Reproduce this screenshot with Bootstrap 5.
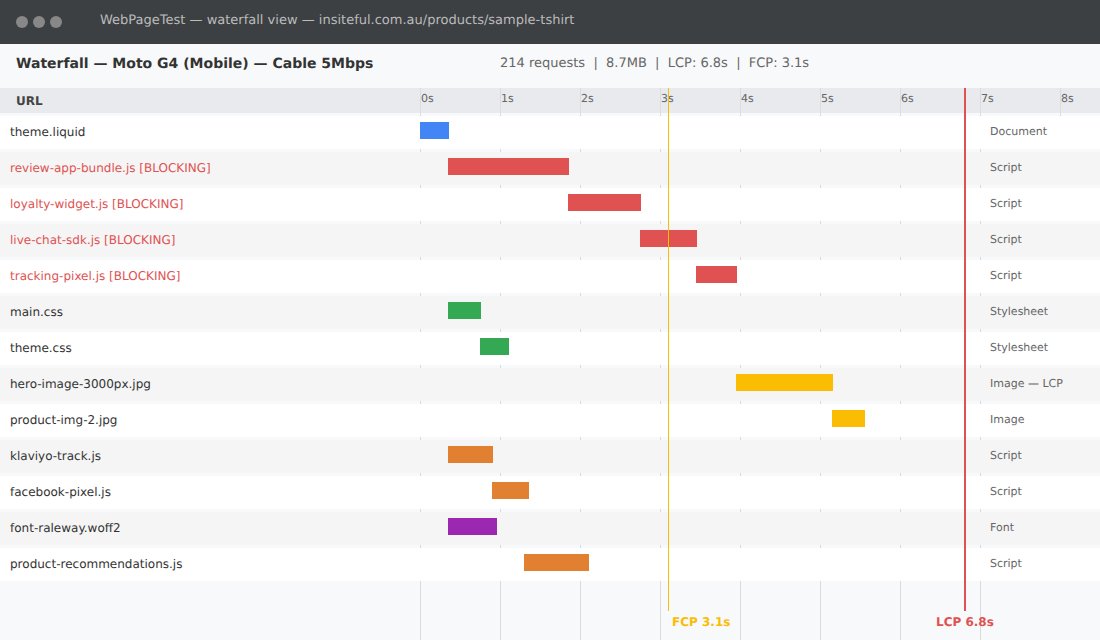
<!DOCTYPE html>
<html lang="en">
<head>
  <meta charset="UTF-8">
  <meta name="viewport" content="width=device-width, initial-scale=1.0">
  <title>WebPageTest waterfall</title>
  <link href="https://cdn.jsdelivr.net/npm/bootstrap@5.3.0/dist/css/bootstrap.min.css" rel="stylesheet">
  <style>
    html, body { height: 640px; overflow: hidden; }
    body { background: #f8f9fa; font-family: "DejaVu Sans", sans-serif; font-size: 12px; color: #333; text-rendering: geometricPrecision; }

    .title-bar { height: 44px; background: #3c4043; padding-left: 16px; }
    .win-dot { width: 12px; height: 12px; border-radius: 50%; background: #888; margin-right: 5px; }
    .title-text { margin-left: 33px; font-size: 13px; color: #bbb; margin-top: -2px; }

    .sum-bar { height: 44px; background: #f8f9fa; padding-bottom: 4px; }
    .sum-title { width: 500px; padding-left: 16px; font-size: 14px; font-weight: 700; color: #333; }
    .sum-stats { font-size: 13px; color: #666; }

    .chart-wrap { height: 552px; }
    .grid-lines { left: 420px; top: 0; bottom: 0; }
    .grid-line { width: 80px; border-left: 1px solid #dadce0; }

    .head-row { height: 25px; background: #e8eaed; margin-bottom: 3px; }
    .head-url { width: 420px; padding-left: 16px; font-weight: 700; color: #444; }
    .tick { width: 80px; height: 28px; margin-bottom: -3px; border-left: 1px solid #dadce0; padding-top: 4px; font-size: 11px; color: #666; line-height: 14px; }

    .req-row { height: 33px; margin-bottom: 3px; background: #fff; }
    .req-row.alt { background: #f5f5f5; }
    .req-name { width: 420px; padding-left: 10px; padding-bottom: 2px; color: #333; }
    .req-name.blocking { color: #e05252; }
    .req-track { width: 560px; padding-top: 6px; }
    .req-bar { height: 17px; }
    .req-type { padding-left: 10px; font-size: 11px; color: #666; }

    .bar-doc { background: #4285f4; }
    .bar-block { background: #e05252; }
    .bar-css { background: #34a853; }
    .bar-img { background: #fbbc04; }
    .bar-js { background: #e08030; }
    .bar-font { background: #9c27b0; }

    .mark-line { top: 0; height: 523px; }
    .mark-fcp { left: 668px; width: 1px; background: #fbbc04; }
    .mark-lcp { left: 964px; width: 2px; background: #e05252; }
    .mark-label { top: 527px; font-size: 12px; font-weight: 700; line-height: 14px; }
    .label-fcp { left: 672px; color: #fbbc04; }
    .label-lcp { left: 936px; color: #e05252; }
  </style>
</head>
<body>
  <div class="title-bar d-flex align-items-center">
    <span class="win-dot"></span>
    <span class="win-dot"></span>
    <span class="win-dot"></span>
    <span class="title-text">WebPageTest — waterfall view — insiteful.com.au/products/sample-tshirt</span>
  </div>

  <div class="sum-bar d-flex align-items-center">
    <div class="sum-title">Waterfall — Moto G4 (Mobile) — Cable 5Mbps</div>
    <div class="sum-stats">214 requests &nbsp;|&nbsp; 8.7MB &nbsp;|&nbsp; LCP: 6.8s &nbsp;|&nbsp; FCP: 3.1s</div>
  </div>

  <div class="chart-wrap position-relative">
    <div class="grid-lines position-absolute d-flex">
      <div class="grid-line"></div><div class="grid-line"></div><div class="grid-line"></div>
      <div class="grid-line"></div><div class="grid-line"></div><div class="grid-line"></div>
      <div class="grid-line"></div><div class="grid-line"></div>
    </div>

    <div class="position-relative">
      <div class="head-row d-flex">
        <div class="head-url d-flex align-items-center flex-shrink-0">URL</div>
        <div class="tick flex-shrink-0">0s</div><div class="tick flex-shrink-0">1s</div><div class="tick flex-shrink-0">2s</div><div class="tick flex-shrink-0">3s</div>
        <div class="tick flex-shrink-0">4s</div><div class="tick flex-shrink-0">5s</div><div class="tick flex-shrink-0">6s</div><div class="tick flex-shrink-0">7s</div>
        <div class="tick flex-shrink-0">8s</div>
      </div>
      <div id="rows"></div>
    </div>

    <div class="mark-line mark-fcp position-absolute"></div>
    <div class="mark-line mark-lcp position-absolute"></div>
    <div class="mark-label label-fcp position-absolute">FCP 3.1s</div>
    <div class="mark-label label-lcp position-absolute">LCP 6.8s</div>
  </div>

  <script>
    // name, start px, width px, bar class, type
    const requests = [
      ['theme.liquid', 0, 29, 'bar-doc', 'Document'],
      ['review-app-bundle.js [BLOCKING]', 28, 121, 'bar-block', 'Script'],
      ['loyalty-widget.js [BLOCKING]', 148, 73, 'bar-block', 'Script'],
      ['live-chat-sdk.js [BLOCKING]', 220, 57, 'bar-block', 'Script'],
      ['tracking-pixel.js [BLOCKING]', 276, 41, 'bar-block', 'Script'],
      ['main.css', 28, 33, 'bar-css', 'Stylesheet'],
      ['theme.css', 60, 29, 'bar-css', 'Stylesheet'],
      ['hero-image-3000px.jpg', 316, 97, 'bar-img', 'Image — LCP'],
      ['product-img-2.jpg', 412, 33, 'bar-img', 'Image'],
      ['klaviyo-track.js', 28, 45, 'bar-js', 'Script'],
      ['facebook-pixel.js', 72, 37, 'bar-js', 'Script'],
      ['font-raleway.woff2', 28, 49, 'bar-font', 'Font'],
      ['product-recommendations.js', 104, 65, 'bar-js', 'Script']
    ];

    const rows = document.getElementById('rows');
    requests.forEach((r, i) => {
      const row = document.createElement('div');
      row.className = 'req-row d-flex' + (i % 2 ? ' alt' : '');
      const nameClass = r[3] === 'bar-block' ? ' blocking' : '';
      row.innerHTML = `
        <div class="req-name d-flex align-items-center${nameClass}">${r[0]}</div>
        <div class="req-track"><div class="req-bar ${r[3]}" style="margin-left:${r[1]}px;width:${r[2]}px"></div></div>
        <div class="req-type d-flex align-items-center">${r[4]}</div>`;
      rows.appendChild(row);
    });
  </script>

  <script src="https://cdn.jsdelivr.net/npm/bootstrap@5.3.0/dist/js/bootstrap.bundle.min.js"></script>
</body>
</html>
